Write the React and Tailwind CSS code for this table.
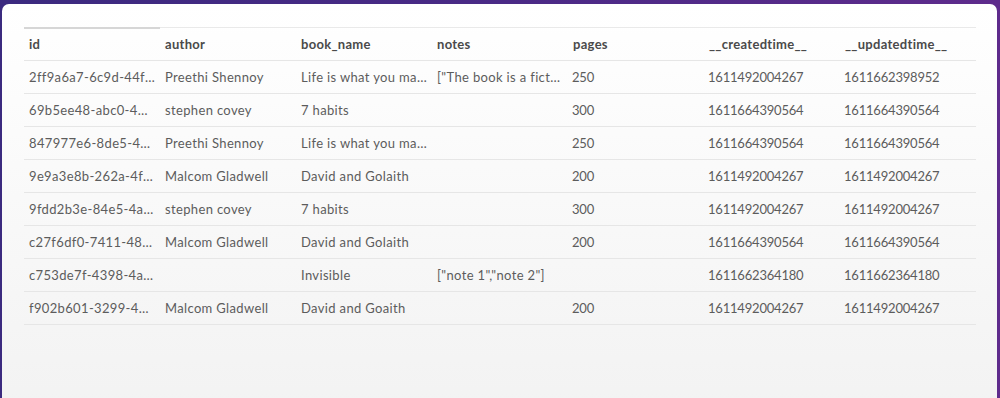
import React from "react";

const columns = ["id", "author", "book_name", "notes", "pages", "__createdtime__", "__updatedtime__"];

const rows = [
  ["2ff9a6a7-6c9d-44f3-a1c2-8e9b7d1f0a21", "Preethi Shennoy", "Life is what you make it", '["The book is a fiction"]', "250", "1611492004267", "1611662398952"],
  ["69b5ee48-abc0-4332-9d1e-55a0b8c7e310", "stephen covey", "7 habits", "", "300", "1611664390564", "1611664390564"],
  ["847977e6-8de5-4521-bb0a-3c9f6e2d8a77", "Preethi Shennoy", "Life is what you make it", "", "250", "1611664390564", "1611664390564"],
  ["9e9a3e8b-262a-4f10-8c3b-7a2d1e9f0b44", "Malcom Gladwell", "David and Golaith", "", "200", "1611492004267", "1611492004267"],
  ["9fdd2b3e-84e5-4a6c-9b21-0e7f3a5c8d12", "stephen covey", "7 habits", "", "300", "1611492004267", "1611492004267"],
  ["c27f6df0-7411-48b3-a9e2-6d4c1b0f7e88", "Malcom Gladwell", "David and Golaith", "", "200", "1611664390564", "1611664390564"],
  ["c753de7f-4398-4a1b-8f3e-2c9d7b6a1e05", "", "Invisible", '["note 1","note 2"]', "", "1611662364180", "1611662364180"],
  ["f902b601-3299-4c8d-b7a0-1e5f9c3d2b66", "Malcom Gladwell", "David and Goaith", "", "200", "1611492004267", "1611492004267"],
];

export default function App() {
  return (
    <div className="h-[398px] overflow-hidden bg-gradient-to-r from-[#3b2a7f] via-[#4a2a86] to-[#5e2b8c] pt-[4px] pl-[2px] pr-[3px] font-['Lato',sans-serif]">
      <div className="h-[420px] rounded-t-[7px] bg-gradient-to-b from-white to-[#f2f2f2] pt-[23px] pl-[22px] pr-[20px]">
        <div className="w-[952px]">
          <div className="flex border-t border-[#e9e9e9]">
            <div className="-mt-[1px] h-[2px] w-[136px] bg-[#d6d6d6]" />
          </div>
          <div className="grid grid-cols-7 h-[33px] items-center border-b border-[#e6e6e6] -mt-[1px] pt-[1px]">
            {columns.map((c) => (
              <div key={c} className="px-[5px] text-[13px] font-bold tracking-[0.3px] text-[#4a4a4a] truncate">
                {c}
              </div>
            ))}
          </div>
          {rows.map((r, i) => (
            <div key={i} className="grid grid-cols-7 h-[33px] items-center border-b border-[#e6e6e6] pt-[2px]">
              {r.map((v, j) =>
                j >= 4 ? (
                  <div key={j} className="px-[4px] text-[13px] tracking-[-0.2px] text-[#5c5c5c] truncate">
                    {v}
                  </div>
                ) : (
                  <div key={j} className="px-[5px] text-[13px] tracking-[0.35px] text-[#5c5c5c] truncate">
                    {v}
                  </div>
                )
              )}
            </div>
          ))}
        </div>
      </div>
    </div>
  );
}
